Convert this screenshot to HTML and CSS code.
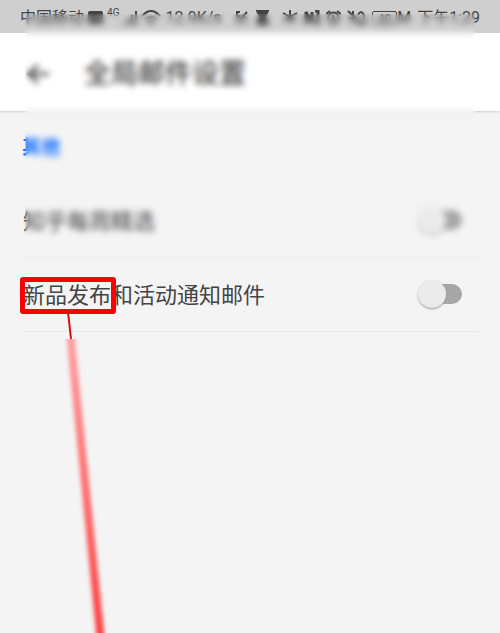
FILE: index.html
```
<!DOCTYPE html>
<html lang="zh-CN">
<head>
  <meta charset="UTF-8">
  <meta name="viewport" content="width=device-width, initial-scale=1">
  <title>全局邮件设置</title>
  <link rel="stylesheet" href="styles.css">
</head>
<body>
  <div class="screen">
    <div class="status-bar">
      <div class="status-group">
        <span>中国移动</span>
        <svg width="15" height="13" viewBox="0 0 15 13"><rect width="15" height="13" rx="2" fill="#444"/><path d="M3 5v5M7 5v5M3 7h4M9 5v5h1q3-1 3-3T10 5z" fill="none" stroke="#aaa"/></svg>
        <span class="network">4G</span>
        <svg width="14" height="14" viewBox="0 0 14 14"><path d="M1 14v-3M5 14V8M9 14V4M13 14V0" stroke="#444" stroke-width="2"/></svg>
        <svg width="20" height="15" viewBox="0 0 20 15"><path d="M1 6q9-10 18 0M4 10q6-6 12 0" fill="none" stroke="#444" stroke-width="2"/><circle cx="10" cy="13" r="2" fill="#444"/></svg>
        <span class="speed">12.9K/s</span>
      </div>
      <div class="status-group notices">
        <svg width="13" height="14" viewBox="0 0 13 14"><path d="M12 1L1 13M1 1h4M2 1v5l3-1M8 6l4 1M8 12l4 0" fill="none" stroke="#444" stroke-width="2"/></svg>
        <svg width="13" height="15" viewBox="0 0 13 15"><path d="M0 0h13v1l-3 6 3 6v2H0v-2l3-6-3-6z" fill="#444"/></svg>
      </div>
      <div class="status-group alerts">
        <svg width="16" height="15" viewBox="0 0 16 15"><path d="M8 0v14M1 3l14 8M1 11l14-8" stroke="#444" stroke-width="2"/></svg>
        <svg width="16" height="15" viewBox="0 0 16 15"><path d="M2 14V2l6 11V2M11 1h3v13h-3" fill="none" stroke="#444" stroke-width="3"/></svg>
        <svg width="15" height="15" viewBox="0 0 15 15"><path d="M0 4l4-3M15 4l-4-3M7 5v4l3 1" fill="none" stroke="#444" stroke-width="2"/><circle cx="7.500" cy="8" r="5.500" fill="none" stroke="#444" stroke-width="2"/></svg>
        <svg width="19" height="16" viewBox="0 0 19 16"><path d="M1 1l15 14M6 1v13M1 8h4M11 5q3-6 6 0v5l2 3h-9" fill="none" stroke="#444" stroke-width="2"/></svg>
        <span class="power"><span class="battery">49</span>M</span>
        <span>下午1:29</span>
      </div>
    </div>

    <header class="app-bar">
      <button class="back" aria-label="返回">
        <svg width="24" height="22" viewBox="0 0 24 22"><path d="M23 11H3M12 2l-9 9 9 9" fill="none" stroke="#444" stroke-width="3"/></svg>
      </button>
      <h1>全局邮件设置</h1>
    </header>

    <main class="settings">
      <h2>其他</h2>
      <div class="row">
        <label for="weekly">知乎每周精选</label>
        <input class="switch" type="checkbox" id="weekly">
      </div>
      <div class="row">
        <label for="product"><span class="marked">新品发布<svg class="pointer" width="60" height="321" viewBox="0 0 60 321">
          <defs>
            <linearGradient id="fade" gradientUnits="userSpaceOnUse" x1="0" y1="28" x2="0" y2="321">
              <stop offset="0" stop-color="#ff9d9d"/>
              <stop offset="1" stop-color="#ff4040"/>
            </linearGradient>
            <filter id="soft" filterUnits="userSpaceOnUse" x="0" y="27" width="60" height="300">
              <feGaussianBlur stdDeviation="2 1"/>
            </filter>
          </defs>
          <path d="M8 0L11 27" stroke="#d80d14" stroke-width="2"/>
          <path d="M10 18L14 60L42 340" fill="none" stroke="url(#fade)" stroke-width="8" filter="url(#soft)"/>
        </svg></span>和活动通知邮件</label>
        <input class="switch" type="checkbox" id="product">
      </div>
    </main>

    <div class="frost"></div>
  </div>
</body>
</html>
```

FILE: styles.css
```
* {
  margin: 0;
  padding: 0;
  box-sizing: border-box;
}

body {
  background: #f4f4f4;
  font-family: Roboto, "Noto Sans CJK SC", sans-serif;
  color: #444;
}

.screen {
  position: relative;
  min-height: 100vh;
  overflow: hidden;
}

.status-bar {
  display: flex;
  justify-content: space-between;
  height: 33px;
  padding: 2px 20px 0;
  background: #cfcfcf;
  font-size: 16px;
  line-height: 30px;
  white-space: nowrap;
}

.status-group {
  display: flex;
  align-items: center;
  gap: 4px;
}

.network {
  align-self: flex-start;
  font-size: 10px;
  line-height: 22px;
}

.notices {
  gap: 8px;
}

.alerts {
  gap: 6px;
}

.power {
  display: flex;
  align-items: center;
}

.battery {
  height: 14px;
  padding: 0 5px;
  border: 1px solid #444;
  border-radius: 2px;
  font-size: 12px;
  line-height: 14px;
}

.app-bar {
  display: flex;
  align-items: center;
  gap: 34px;
  height: 78px;
  padding: 4px 26px 0;
  background: #fff;
  box-shadow: 0 1px 2px #ccc;
}

.back {
  display: flex;
  border: 0;
  background: none;
}

h1 {
  font-size: 27px;
  font-weight: 500;
  line-height: 36px;
}

.settings {
  padding: 25px 22px;
}

h2 {
  color: #0f6eff;
  font-size: 19px;
  font-weight: 700;
  line-height: 24px;
}

.row {
  display: flex;
  align-items: center;
  justify-content: space-between;
  height: 74px;
  padding: 0 16px 2px 1px;
  border-bottom: 1px solid #e8e8e8;
  font-size: 22px;
}

.row label {
  padding-bottom: 2px;
}

h2 + .row {
  margin-top: 24px;
}

.switch {
  appearance: none;
  position: relative;
  width: 40px;
  height: 20px;
  border-radius: 10px;
  background: #a6a6a6;
}

.switch::before {
  content: "";
  position: absolute;
  top: -4px;
  left: -4px;
  width: 28px;
  height: 28px;
  border-radius: 50%;
  background: #ebebeb;
  box-shadow: 0 1px 2px #999;
}

.switch:checked::before {
  left: 16px;
}

/* red frame around the setting, with its pointer line */
.marked {
  position: relative;
}

.marked::before {
  content: "";
  position: absolute;
  top: -6px;
  bottom: -6px;
  left: -3px;
  right: -5px;
  border: 5px solid #fb0007;
  border-radius: 3px;
}

.pointer {
  position: absolute;
  top: calc(100% + 4px);
  left: 37px;
}

.frost {
  position: absolute;
  top: 14px;
  left: 25px;
  right: 25px;
  height: 244px;
  backdrop-filter: blur(3px);
}
```
